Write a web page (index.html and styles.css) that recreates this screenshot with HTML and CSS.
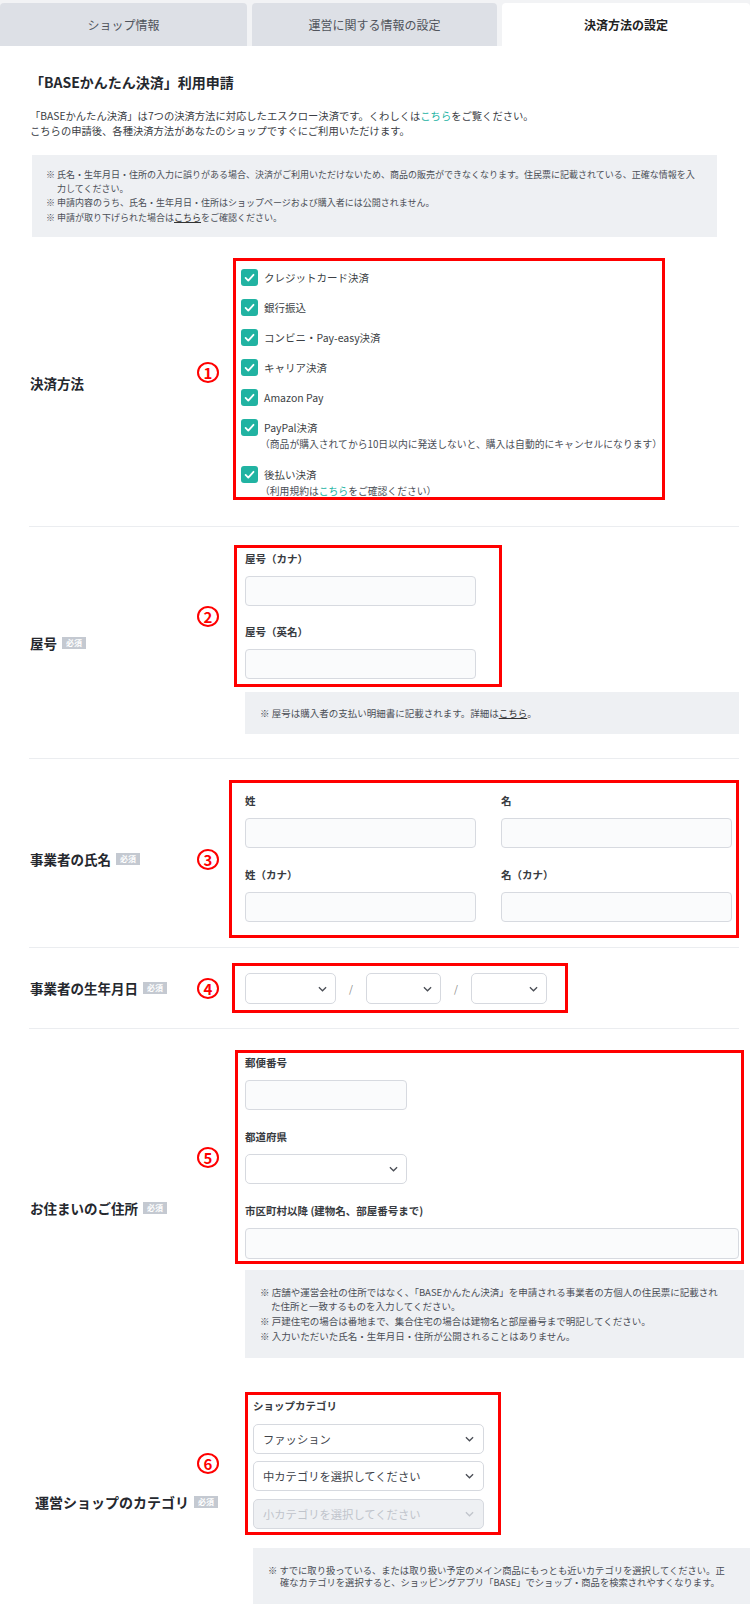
FILE: index.html
```html
<!DOCTYPE html>
<html lang="ja">
<head>
<meta charset="utf-8">
<title>決済方法の設定</title>
<link rel="stylesheet" href="styles.css">
</head>
<body>
<div class="page">
  <nav class="tabs">
    <div class="tab tab--shop">ショップ情報</div>
    <div class="tab tab--ops">運営に関する情報の設定</div>
    <div class="tab tab--active">決済方法の設定</div>
  </nav>

  <main class="content">
    <h1 class="title">「BASEかんたん決済」利用申請</h1>
    <p class="lead">「BASEかんたん決済」は7つの決済方法に対応したエスクロー決済です。くわしくは<a class="link">こちら</a>をご覧ください。<br>こちらの申請後、各種決済方法があなたのショップですぐにご利用いただけます。</p>

    <ul class="note note--intro">
      <li>※ 氏名・生年月日・住所の入力に誤りがある場合、決済がご利用いただけないため、商品の販売ができなくなります。住民票に記載されている、正確な情報を入<br>力してください。</li>
      <li>※ 申請内容のうち、氏名・生年月日・住所はショップページおよび購入者には公開されません。</li>
      <li>※ 申請が取り下げられた場合は<u>こちら</u>をご確認ください。</li>
    </ul>

    <!-- ① 決済方法 -->
    <section class="row row--pay">
      <div class="row__label row__label--low">決済方法</div>
      <div class="row__num row__num--up"><span class="num">1</span></div>
      <div class="redbox redbox--pay">
        <ul class="checks">
          <li class="check">
            <div class="check__row"><span class="check__box"><svg viewBox="0 0 17 17"><path d="M4.6 8.9l2.7 2.7 5.2-5.8"/></svg></span><span class="check__text">クレジットカード決済</span></div>
          </li>
          <li class="check">
            <div class="check__row"><span class="check__box"><svg viewBox="0 0 17 17"><path d="M4.6 8.9l2.7 2.7 5.2-5.8"/></svg></span><span class="check__text">銀行振込</span></div>
          </li>
          <li class="check">
            <div class="check__row"><span class="check__box"><svg viewBox="0 0 17 17"><path d="M4.6 8.9l2.7 2.7 5.2-5.8"/></svg></span><span class="check__text">コンビニ・Pay-easy決済</span></div>
          </li>
          <li class="check">
            <div class="check__row"><span class="check__box"><svg viewBox="0 0 17 17"><path d="M4.6 8.9l2.7 2.7 5.2-5.8"/></svg></span><span class="check__text">キャリア決済</span></div>
          </li>
          <li class="check">
            <div class="check__row"><span class="check__box"><svg viewBox="0 0 17 17"><path d="M4.6 8.9l2.7 2.7 5.2-5.8"/></svg></span><span class="check__text">Amazon Pay</span></div>
          </li>
          <li class="check check--sub">
            <div class="check__row"><span class="check__box"><svg viewBox="0 0 17 17"><path d="M4.6 8.9l2.7 2.7 5.2-5.8"/></svg></span><span class="check__text">PayPal決済</span></div>
            <p class="check__sub">（商品が購入されてから10日以内に発送しないと、購入は自動的にキャンセルになります）</p>
          </li>
          <li class="check check--sub">
            <div class="check__row"><span class="check__box"><svg viewBox="0 0 17 17"><path d="M4.6 8.9l2.7 2.7 5.2-5.8"/></svg></span><span class="check__text">後払い決済</span></div>
            <p class="check__sub">（利用規約は<a class="link">こちら</a>をご確認ください）</p>
          </li>
        </ul>
      </div>
    </section>

    <!-- ② 屋号 -->
    <section class="row row--trade">
      <div class="row__label row__label--low">屋号<span class="badge">必須</span></div>
      <div class="row__num"><span class="num">2</span></div>
      <div class="redbox redbox--trade">
        <div class="field">
          <div class="field__label">屋号（カナ）</div>
          <input class="input" type="text">
        </div>
        <div class="field">
          <div class="field__label">屋号（英名）</div>
          <input class="input" type="text">
        </div>
      </div>
      <ul class="note note--field note--trade">
        <li>※ 屋号は購入者の支払い明細書に記載されます。詳細は<u>こちら</u>。</li>
      </ul>
    </section>

    <!-- ③ 氏名 -->
    <section class="row row--name">
      <div class="row__label">事業者の氏名<span class="badge">必須</span></div>
      <div class="row__num"><span class="num">3</span></div>
      <div class="redbox redbox--name">
        <div class="field">
          <div class="field__label">姓</div>
          <input class="input" type="text">
        </div>
        <div class="field">
          <div class="field__label">名</div>
          <input class="input" type="text">
        </div>
        <div class="field">
          <div class="field__label">姓（カナ）</div>
          <input class="input" type="text">
        </div>
        <div class="field">
          <div class="field__label">名（カナ）</div>
          <input class="input" type="text">
        </div>
      </div>
    </section>

    <!-- ④ 生年月日 -->
    <section class="row row--birth">
      <div class="row__label">事業者の生年月日<span class="badge">必須</span></div>
      <div class="row__num"><span class="num">4</span></div>
      <div class="redbox redbox--birth">
        <div class="select select--y"><span></span><svg class="chev" viewBox="0 0 10 6"><path d="M1 1l4 4 4-4"/></svg></div>
        <span class="slash">/</span>
        <div class="select select--m"><span></span><svg class="chev" viewBox="0 0 10 6"><path d="M1 1l4 4 4-4"/></svg></div>
        <span class="slash">/</span>
        <div class="select select--d"><span></span><svg class="chev" viewBox="0 0 10 6"><path d="M1 1l4 4 4-4"/></svg></div>
      </div>
    </section>

    <!-- ⑤ 住所 -->
    <section class="row row--addr">
      <div class="row__label row__label--low">お住まいのご住所<span class="badge">必須</span></div>
      <div class="row__num"><span class="num">5</span></div>
      <div class="redbox redbox--addr">
        <div class="field">
          <div class="field__label">郵便番号</div>
          <input class="input input--short" type="text">
        </div>
        <div class="field">
          <div class="field__label">都道府県</div>
          <div class="select select--pref"><span></span><svg class="chev" viewBox="0 0 10 6"><path d="M1 1l4 4 4-4"/></svg></div>
        </div>
        <div class="field">
          <div class="field__label">市区町村以降 (建物名、部屋番号まで)</div>
          <input class="input input--wide" type="text">
        </div>
      </div>
      <ul class="note note--field note--addr">
        <li>※ 店舗や運営会社の住所ではなく、「BASEかんたん決済」を申請される事業者の方個人の住民票に記載され<br>た住所と一致するものを入力してください。</li>
        <li>※ 戸建住宅の場合は番地まで、集合住宅の場合は建物名と部屋番号まで明記してください。</li>
        <li>※ 入力いただいた氏名・生年月日・住所が公開されることはありません。</li>
      </ul>
    </section>

    <!-- ⑥ カテゴリ -->
    <section class="row row--cat">
      <div class="row__label row__label--low row__label--cat">運営ショップのカテゴリ<span class="badge">必須</span></div>
      <div class="row__num"><span class="num">6</span></div>
      <div class="redbox redbox--cat">
        <div class="field__label">ショップカテゴリ</div>
        <div class="select select--cat"><span>ファッション</span><svg class="chev" viewBox="0 0 10 6"><path d="M1 1l4 4 4-4"/></svg></div>
        <div class="select select--cat"><span>中カテゴリを選択してください</span><svg class="chev" viewBox="0 0 10 6"><path d="M1 1l4 4 4-4"/></svg></div>
        <div class="select select--cat select--disabled"><span>小カテゴリを選択してください</span><svg class="chev" viewBox="0 0 10 6"><path d="M1 1l4 4 4-4"/></svg></div>
      </div>
      <ul class="note note--field note--cat">
        <li>※ すでに取り扱っている、または取り扱い予定のメイン商品にもっとも近いカテゴリを選択してください。正<br>確なカテゴリを選択すると、ショッピングアプリ「BASE」でショップ・商品を検索されやすくなります。</li>
      </ul>
    </section>
  </main>
</div>
</body>
</html>
```

FILE: styles.css
```css
* { box-sizing: border-box; }

html, body {
  margin: 0;
  padding: 0;
  background: #fff;
}

body {
  font-family: "Noto Sans CJK JP", "Noto Sans", sans-serif;
  color: #333;
}

.page {
  width: 750px;
  overflow: hidden;
}

/* Tabs */
.tabs {
  display: flex;
  gap: 5px;
  height: 46px;
  padding-top: 3px;
  background: #f2f3f5;
}

.tab {
  display: flex;
  align-items: center;
  justify-content: center;
  background: #dde0e6;
  border-radius: 4px 4px 0 0;
  font-size: 12px;
  color: #50545c;
}

.tab--shop { width: 247px; }
.tab--ops { width: 245px; }

.tab--active {
  flex: 1;
  background: #fff;
  color: #222;
  font-weight: 700;
}

/* Content */
.content {
  padding: 0 11px 3px 29px;
}

.title {
  margin: 26px 0 0 1px;
  font-size: 14px;
  line-height: 20px;
  font-weight: 700;
  color: #25282e;
}

.lead {
  margin: 17px 0 0 1px;
  font-size: 10.3px;
  line-height: 14.5px;
  color: #3a3d44;
}

.link {
  color: #1bb3a3;
  text-decoration: none;
}

/* Notes */
.note {
  list-style: none;
  margin: 0;
  background: #eef0f3;
  font-size: 9px;
  line-height: 13.5px;
  color: #4a4e56;
}

.note li {
  padding-left: 11px;
  text-indent: -11px;
}

.note li + li { margin-top: 1px; }

.note u { color: #333; }

.note--intro {
  margin: 17px 22px 0 3px;
  padding: 13px 14px;
}

.note--field {
  grid-column: 3;
  grid-row: 2;
}

.note--trade {
  margin: 5px 0 0 25px;
  padding: 14px 15px;
  line-height: 14px;
  font-size: 9.5px;
}

.note--addr {
  margin: 6px 0 0 25px;
  padding: 15px 12px 15px 15px;
  line-height: 14px;
  font-size: 9.5px;
}

.note--cat {
  margin: 13px -11px 0 33px;
  padding: 16px 10px 16px 15px;
  line-height: 12px;
  font-size: 9.3px;
}

.note--cat li {
  padding-left: 12px;
  text-indent: -12px;
}

/* Rows */
.row {
  display: grid;
  grid-template-columns: 167px 24px 1fr;
  align-items: center;
  border-bottom: 1px solid #ebedf0;
}

.row__label {
  grid-column: 1;
  grid-row: 1 / span 2;
  display: flex;
  align-items: center;
  font-size: 13.5px;
  font-weight: 700;
  color: #25282e;
  white-space: nowrap;
  padding-left: 1px;
}

.row__label--low { padding-top: 7px; }
.row__label--cat { padding-left: 6px; font-size: 14px; }

.badge {
  display: inline-block;
  margin-left: 5px;
  padding: 0 4px;
  height: 12px;
  line-height: 12px;
  font-size: 8px;
  font-weight: 700;
  color: #fff;
  background: #c4c9d1;
}

.row__num {
  grid-column: 2;
  grid-row: 1;
  display: flex;
  justify-content: center;
}

.num {
  flex: none;
  width: 22px;
  height: 21px;
  border: 2.6px solid #f00;
  border-radius: 50%;
  display: flex;
  align-items: center;
  justify-content: center;
  color: #f00;
  font-weight: 700;
  font-size: 15px;
  line-height: 1;
}

.row__num--up { margin-top: -14px; }

.redbox {
  grid-column: 3;
  grid-row: 1;
  justify-self: start;
  border: 3px solid #f00;
}

.row--pay { padding: 21px 0 26px; }
.row--trade { padding: 18px 0 24px; }
.row--name { padding: 21px 0 9px; }
.row--birth { padding: 15px 0; }
.row--addr { padding: 21px 0 0; border-bottom: 0; }
.row--cat { padding: 34px 0 3px; border-bottom: 0; }

/* ① checkboxes */
.redbox--pay {
  margin-left: 13px;
  width: 432px;
  padding: 8px 0 0 5px;
}

.checks {
  list-style: none;
  margin: 0;
  padding: 0;
}

.check + .check { margin-top: 13px; }
.check--sub + .check { margin-top: 16px; }

.check__row {
  display: flex;
  align-items: center;
  height: 17px;
}

.check__box {
  width: 17px;
  height: 17px;
  border-radius: 3px;
  background: #21b3a2;
  display: flex;
}

.check__box svg {
  width: 17px;
  height: 17px;
}

.check__box path {
  fill: none;
  stroke: #fff;
  stroke-width: 1.8;
  stroke-linecap: round;
  stroke-linejoin: round;
}

.check__text {
  margin-left: 6px;
  font-size: 10.5px;
  color: #3c3f45;
}

.check__sub {
  margin: 2px 0 0 19px;
  font-size: 9.8px;
  line-height: 12px;
  color: #4a4e56;
}

/* fields */
.field__label {
  font-size: 10.5px;
  line-height: 14px;
  font-weight: 700;
  color: #373a40;
}

.input {
  display: block;
  width: 231px;
  height: 30px;
  margin: 10px 0 0;
  padding: 0 8px;
  border: 1px solid #d7dae0;
  border-radius: 4px;
  background: #fafbfc;
  font: inherit;
  outline: none;
}

.input--short { width: 162px; }
.input--wide { width: 494px; height: 31px; }

.select {
  display: flex;
  align-items: center;
  justify-content: space-between;
  height: 31px;
  padding: 0 8px 0 9px;
  border: 1px solid #d6d9df;
  border-radius: 5px;
  background: #fff;
  font-size: 11px;
  color: #40434a;
}

.chev {
  width: 9px;
  height: 6px;
  flex: none;
}

.chev path {
  fill: none;
  stroke: #4a4d55;
  stroke-width: 1.4;
}

/* ② */
.redbox--trade {
  margin-left: 14px;
  width: 268px;
  padding: 4px 0 5px 8px;
}

.redbox--trade .field + .field { margin-top: 19px; }

/* ③ */
.redbox--name {
  margin-left: 9px;
  width: 510px;
  padding: 11px 0 13px 13px;
  display: grid;
  grid-template-columns: 231px 231px;
  column-gap: 25px;
  row-gap: 20px;
}

/* ④ */
.redbox--birth {
  margin-left: 12px;
  width: 336px;
  padding: 7px 0 6px 10px;
  display: flex;
  align-items: center;
}

.select--y { width: 91px; }
.select--m { width: 75px; }
.select--d { width: 76px; }

.slash {
  width: 30px;
  text-align: center;
  font-size: 10px;
  color: #888;
}

/* ⑤ */
.redbox--addr {
  margin-left: 15px;
  width: 509px;
  padding: 3px 0 2px 7px;
}

.redbox--addr .field + .field { margin-top: 20px; }

.select--pref {
  width: 162px;
  height: 30px;
  margin-top: 10px;
}

/* ⑥ */
.redbox--cat {
  margin-left: 25px;
  width: 256px;
  padding: 4px 0 3px 5px;
}

.select--cat {
  width: 231px;
  height: 30px;
  margin-top: 7px;
  padding: 0 9px 0 9px;
  font-size: 11.3px;
}

.redbox--cat .field__label + .select--cat { margin-top: 11px; }
.select--disabled { margin-top: 8px; background: #eef0f3; color: #c0c4cb; }
.select--disabled .chev path { stroke: #c0c4cb; }
```
